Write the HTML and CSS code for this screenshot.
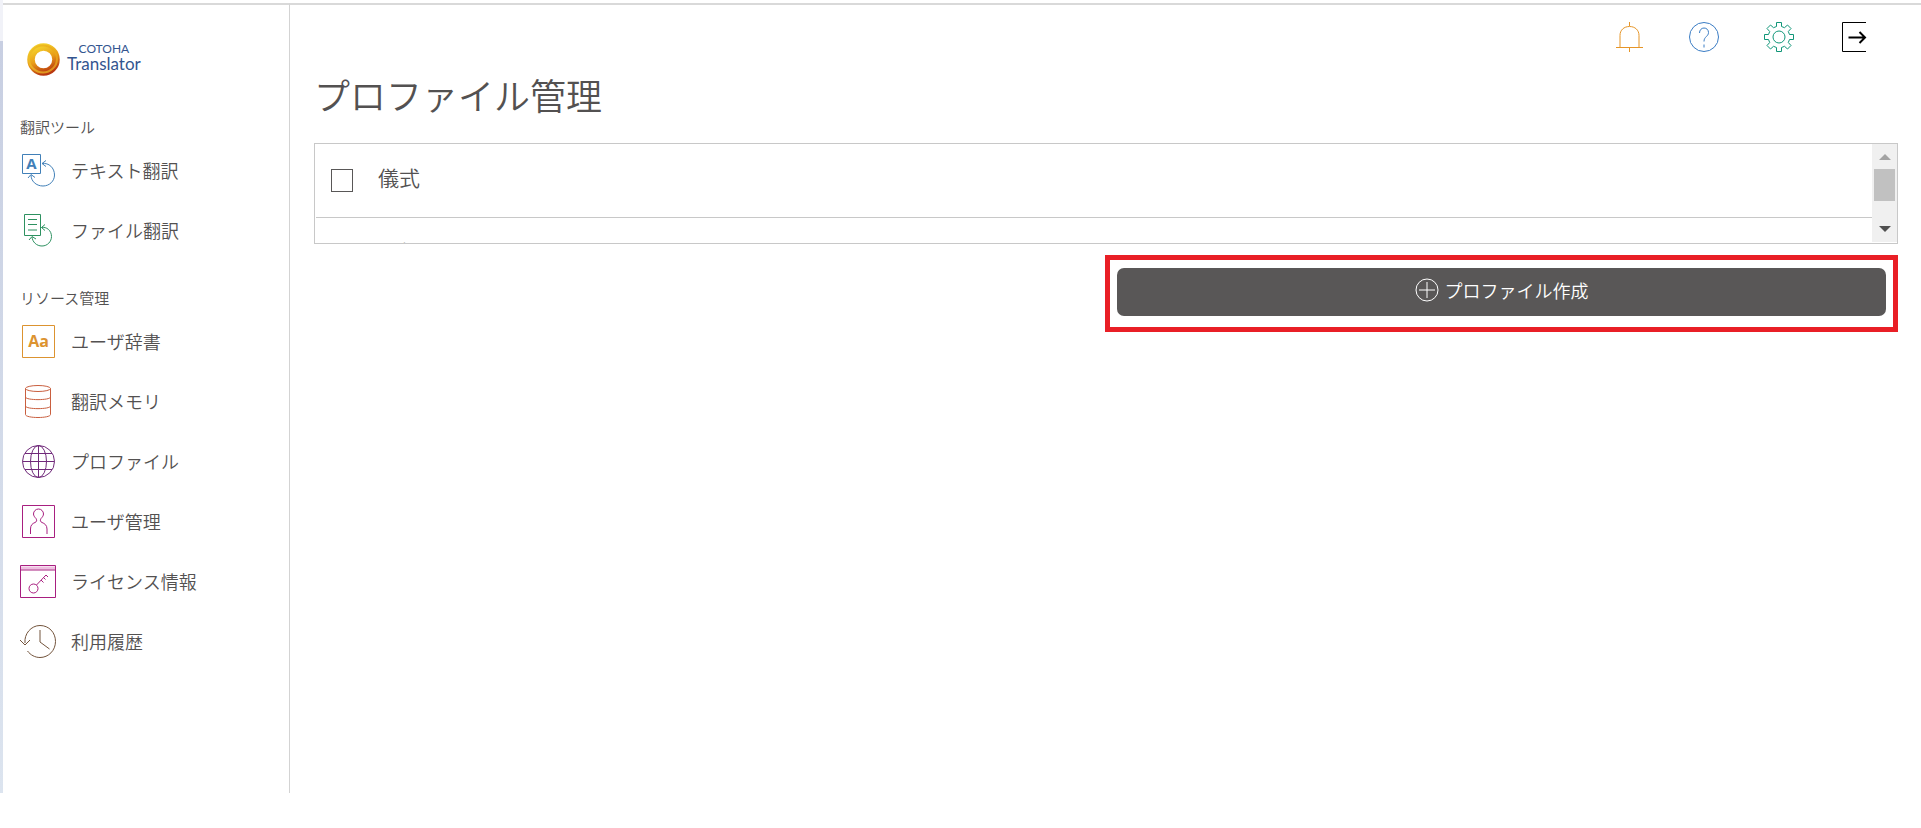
FILE: index.html
```
<!DOCTYPE html>
<html lang="ja">
<head>
    <meta charset="UTF-8">
    <meta name="viewport" content="width=device-width, initial-scale=1.0">
    <title>COTOHA Translator</title>
    <link rel="stylesheet" href="styles.css">
</head>
<body>
<div class="page">
    <div class="edge"></div>

    <!-- Sidebar -->
    <aside class="sidebar">
        <a class="logo" href="#">
            <svg width="34" height="34" viewBox="0 0 34 34">
                <defs>
                    <linearGradient id="ring" x1="0.3" y1="0" x2="0.7" y2="1">
                        <stop offset="0" stop-color="#f3d02c"/>
                        <stop offset="0.5" stop-color="#e89a16"/>
                        <stop offset="1" stop-color="#b9380f"/>
                    </linearGradient>
                    <linearGradient id="shine" x1="1" y1="0" x2="0" y2="1">
                        <stop offset="0" stop-color="#e9a515"/>
                        <stop offset="1" stop-color="#f0c52c"/>
                    </linearGradient>
                </defs>
                <ellipse cx="16.500" cy="17.500" rx="12.500" ry="12.500" fill="none" stroke="url(#ring)" stroke-width="7.500"/>
                <ellipse cx="16" cy="17" rx="14" ry="13.500" fill="none" stroke="url(#shine)" stroke-width="2" opacity=".7"/>
            </svg>
            <span class="logo-text"><span class="logo-top">COTOHA</span><span class="logo-name">Translator</span></span>
        </a>

        <nav>
            <h2>翻訳ツール</h2>
            <ul>
                <li><a href="#">
                    <svg class="blue" viewBox="0 0 36 36">
                        <path d="M2.500 2.500h18v19h-18z"/>
                        <text x="11.500" y="17" font-size="15">A</text>
                        <path d="M22 11.500c7-1 12.500 4.500 12.500 11.500 0 6-5 11-11.500 11-7 0-12-5-12-11"/>
                        <path d="M26 8.500l-4 3 4 3M8 26l3-3.500 4 3"/>
                    </svg>テキスト翻訳</a></li>
                <li><a href="#">
                    <svg class="green" viewBox="0 0 36 36">
                        <path d="M4.500 2.500h16v21h-16zM8 7.500h9M8 12.500h9M8 18h9"/>
                        <path d="M21.500 15.500c5-1 10 3 10 9 0 5-4 9.500-9.500 9.500s-9.500-4-10-9"/>
                        <path d="M25 12.500l-3.500 3 3.500 3M9 28l3-3.500 4 2.500"/>
                    </svg>ファイル翻訳</a></li>
            </ul>

            <h2>リソース管理</h2>
            <ul>
                <li><a href="#">
                    <svg class="orange" viewBox="0 0 36 36">
                        <path d="M2.500 2.500h32v32h-32z"/>
                        <text x="18.500" y="24" font-size="16">Aa</text>
                    </svg>ユーザ辞書</a></li>
                <li><a href="#">
                    <svg class="red" viewBox="0 0 36 36">
                        <ellipse cx="18" cy="5.500" rx="12.500" ry="3"/>
                        <path d="M5.500 5.500v26c0 4 25 4 25 0v-26M5.500 14c0 3.500 25 3.500 25 0M5.500 23c0 3.500 25 3.500 25 0"/>
                    </svg>翻訳メモリ</a></li>
                <li><a href="#">
                    <svg class="purple" viewBox="0 0 36 36">
                        <circle cx="18.500" cy="18.500" r="16"/>
                        <ellipse cx="18.500" cy="18.500" rx="8" ry="16"/>
                        <path d="M18.500 2.500v32M2.500 18.500h32M5 10.500h27M5 26.500h27"/>
                    </svg>プロファイル</a></li>
                <li><a href="#">
                    <svg class="pink" viewBox="0 0 36 36">
                        <path d="M2.500 2.500h32v32h-32z"/>
                        <path d="M10.500 31v-5c0-4 2-5.500 4.500-6.500 2-1 2-2 1-4-1.500-1.500-2.500-3-2.500-4.500a5 5 0 0 1 10 0c0 1.500-1 3-2.500 4.500-1 2-1 3 1 4 2.500 1 5 2.500 5 6.500v5"/>
                    </svg>ユーザ管理</a></li>
                <li><a href="#">
                    <svg class="pink" viewBox="0 0 36 36">
                        <path d="M.5 2.500h35v32H.5z"/>
                        <path d="M1 5h34" stroke="#eebfe0" stroke-width="3"/>
                        <path d="M.5 7h35"/>
                        <circle cx="13.500" cy="25.500" r="4.500"/>
                        <path d="M16.500 22l9.500-10 2 2M21 17l2.500 2.500M23.500 14.500l2 2"/>
                    </svg>ライセンス情報</a></li>
                <li><a href="#">
                    <svg class="brown" viewBox="0 0 36 36">
                        <path d="M5 20C4 11 11 2.500 20 2.500c9 0 15.500 7 15.500 16S28.500 34.500 20 34.500c-5 0-9.500-2.500-12.500-6.500"/>
                        <path d="M0 17l5 5 5-5M20 7v12l9.500 7"/>
                    </svg>利用履歴</a></li>
            </ul>
        </nav>
    </aside>

    <main>
        <div class="toolbar">
            <button type="button" aria-label="お知らせ">
                <svg class="bell" viewBox="0 0 30 30">
                    <path d="M15.500 0v4M6 25V13.500C6 8 10 4.500 15.500 4.500s9.500 3.500 9.500 9V25M2 25.500h27M15.500 26v4"/>
                </svg>
            </button>
            <button type="button" aria-label="ヘルプ">
                <svg class="help" viewBox="0 0 30 30">
                    <circle cx="15" cy="15" r="14.500"/>
                    <path d="M10.500 11c0-3 2-5 4.500-5s4.500 1.800 4.500 4.500c0 4-4.500 4-4.500 9M15 22.500v3"/>
                </svg>
            </button>
            <button type="button" aria-label="設定">
                <svg class="gear" viewBox="0 0 30 30">
                    <circle cx="15" cy="15" r="6"/>
                    <path d="M12.500.5h5v4l3 1.200L23.500 3 27 6.500l-2.700 3 1.200 3h4v5h-4l-1.200 3 2.700 3-3.500 3.500-3-2.700-3 1.200v4h-5v-4l-3-1.200-3 2.700L3 23.500l2.700-3-1.200-3h-4v-5h4l1.200-3L3 6.500 6.500 3l3 2.700 3-1.200z"/>
                </svg>
            </button>
            <button type="button" aria-label="ログアウト">
                <svg class="exit" viewBox="0 0 30 30">
                    <path d="M27 .5H3.500v29H27"/>
                    <path d="M9.500 15.500H26M20.500 10l5.500 5.500-5.500 5.500" stroke-width="2"/>
                </svg>
            </button>
        </div>

        <h1>プロファイル管理</h1>

        <div class="list">
            <ul class="rows">
                <li><input type="checkbox" id="p1"><label for="p1">儀式</label></li>
                <li><input type="checkbox" id="p2"><label for="p2">一般</label></li>
            </ul>
            <div class="scroll">
                <span class="up"></span>
                <span class="thumb"></span>
                <span class="down"></span>
            </div>
        </div>

        <div class="create">
            <button type="button">
                <svg viewBox="0 0 24 24">
                    <circle cx="12" cy="12" r="11"/>
                    <path d="M12 4v16M4 12h16"/>
                </svg>プロファイル作成
            </button>
        </div>
    </main>
</div>
</body>
</html>
```
FILE: styles.css
```
* {
    box-sizing: border-box;
}

body {
    margin: 0;
    background: #fff;
    color: #535151;
    font-family: "Noto Sans CJK JP", sans-serif;
    font-weight: 350;
}

ul {
    list-style: none;
    margin: 0;
    padding: 0;
}

svg {
    flex: none;
    fill: none;
    stroke: currentColor;
}

button {
    font: inherit;
    border: none;
    cursor: pointer;
}

.page {
    display: flex;
    min-height: calc(100vh - 35px);
}

.edge {
    width: 3px;
    background: linear-gradient(#f1f2f8 41px, #c8cfe2 41px, #dce4ef);
}

/* Sidebar */
.sidebar {
    width: 287px;
    border-top: 2px solid #d9d9d9;
    border-right: 1px solid #d3d3d3;
    margin-top: 3px;
    padding: 37px 0 0 17px;
}

.logo {
    display: flex;
    align-items: center;
    gap: 6px;
    height: 34px;
    padding-left: 7px;
    color: #33558f;
    text-decoration: none;
}

.logo-text {
    display: flex;
    flex-direction: column;
    align-items: center;
    padding-bottom: 4px;
    font-family: Lato, sans-serif;
    font-weight: 400;
}

.logo-top {
    font-size: 12px;
    line-height: 12px;
}

.logo-name {
    font-size: 17px;
    line-height: 17px;
}

.sidebar h2 {
    margin: 0;
    font-size: 15px;
    font-weight: 350;
    line-height: 26px;
}

.sidebar nav {
    padding-top: 38px;
}

.sidebar ul {
    margin-bottom: 25px;
}

.sidebar li a {
    display: flex;
    align-items: center;
    gap: 15px;
    height: 60px;
    padding-bottom: 1px;
    color: inherit;
    font-size: 18px;
    text-decoration: none;
}

.sidebar li svg {
    width: 36px;
    height: 36px;
}

.sidebar text {
    fill: currentColor;
    stroke: none;
    font-family: "Open Sans", sans-serif;
    font-weight: 700;
    text-anchor: middle;
}

.sidebar .blue { color: #4180b8; }
.sidebar .green { color: #2d9160; }
.sidebar .orange { color: #dc9330; }
.sidebar .red { color: #c95f3f; }
.sidebar .purple { color: #70297a; }
.sidebar .pink { color: #a81f80; }
.sidebar .brown { color: #73543c; }

/* Content */
main {
    flex: 1;
    border-top: 2px solid #d9d9d9;
    margin-top: 3px;
    padding: 17px 23px 0 24px;
}

.toolbar {
    display: flex;
    justify-content: flex-end;
    gap: 45px;
    padding-right: 29px;
}

.toolbar button {
    width: 30px;
    height: 30px;
    padding: 0;
    background: none;
}

.toolbar svg {
    display: block;
    width: 30px;
    height: 30px;
}

.bell { color: #e69527; }
.help { color: #3a7cc4; }
.gear { color: #109678; }
.exit { color: #000; }

h1 {
    margin: 16px 0 23px;
    font-size: 36px;
    font-weight: 350;
    line-height: 52px;
}

.list {
    display: flex;
    height: 101px;
    border: 1px solid #c8c8c8;
    overflow: hidden;
}

.rows {
    flex: 1;
    padding-left: 1px;
}

.rows li {
    display: flex;
    align-items: center;
    gap: 25px;
    height: 74px;
    padding-left: 15px;
    border-bottom: 1px solid #c8c8c8;
    font-size: 21px;
}

.rows input {
    appearance: none;
    width: 22px;
    height: 23px;
    margin: 0;
    border: 1px solid #595757;
}

.rows label {
    line-height: 30px;
    padding-bottom: 8px;
}

.scroll {
    display: flex;
    flex-direction: column;
    align-items: center;
    width: 25px;
    height: 98px;
    padding: 10px 0;
    background: #f0f0f0;
}

.up,
.down {
    border: 6px solid transparent;
}

.up {
    border-top: 0;
    border-bottom-color: #a3a3a3;
}

.down {
    margin-top: auto;
    border-bottom: 0;
    border-top-color: #505050;
}

.thumb {
    width: 21px;
    height: 32px;
    margin-top: 9px;
    background: #c1c1c1;
}

.create {
    width: calc(50% + 1px);
    margin: 11px 0 0 auto;
    padding: 8px 7px 11px;
    border: 5px solid #e91f26;
}

.create button {
    display: flex;
    align-items: center;
    justify-content: center;
    gap: 6px;
    width: 100%;
    height: 48px;
    padding: 0 0 4px;
    border-radius: 7px;
    background: #595757;
    color: #fff;
    font-size: 18px;
}

.create svg {
    width: 24px;
    height: 24px;
}
```
